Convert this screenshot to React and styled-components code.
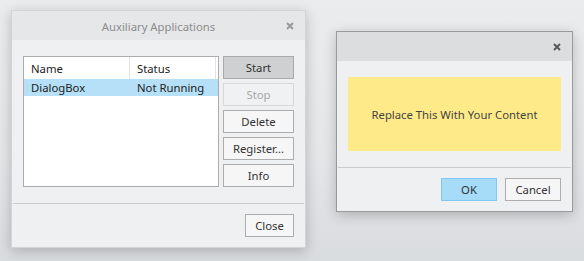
import React from 'react'
import styled, { createGlobalStyle } from 'styled-components'

const GlobalStyle = createGlobalStyle`
  html, body {
    margin: 0;
    padding: 0;
  }
  body {
    width: 584px;
    height: 261px;
    overflow: hidden;
    background: linear-gradient(180deg, #ebecee 0%, #e4e6e8 60%, #d9dcdf 100%);
    font-family: "Noto Sans", "Open Sans", sans-serif;
    font-size: 11.3px;
    color: #333;
  }
`

const Desktop = styled.div`
  display: flex;
  align-items: flex-start;
  gap: 30px;
  padding: 10px 0 0 11px;
`

const Window = styled.div`
  display: flex;
  flex-direction: column;
  width: ${p => p.$width}px;
  height: ${p => p.$height}px;
  margin-top: ${p => p.$top || 0}px;
  box-sizing: border-box;
  background: #eff0f2;
  border: 1px solid ${p => (p.$active ? '#9a9a9a' : '#d3d4d6')};
  box-shadow: 0 3px 12px rgba(0, 0, 0, 0.22);
`

const TitleBar = styled.div`
  position: relative;
  height: 29px;
  display: flex;
  align-items: center;
  justify-content: center;
  background: ${p => (p.$active ? '#dcdddf' : '#e6e7e9')};
  color: #8c8c8c;
  padding-top: 1px;
  box-sizing: border-box;
`

const CloseX = styled.svg`
  position: absolute;
  right: 11px;
  top: 11px;
`

const Body = styled.div`
  flex: 1;
  display: flex;
  gap: 4px;
  padding: 16px 11px 0 11px;
`

const Separator = styled.div`
  height: 1px;
  margin: 0 1px;
  background: #c9cacc;
`

const Footer = styled.div`
  display: flex;
  justify-content: flex-end;
  gap: 8px;
  padding: 10px 11px 10px 11px;
`

const ListBox = styled.div`
  width: 196px;
  height: 131px;
  box-sizing: border-box;
  border: 1px solid #acacac;
  background: #fff;
`

const Row = styled.div`
  display: grid;
  grid-template-columns: 106px 86px 2px;
  height: ${p => p.$h}px;
  align-items: center;
  background: ${p => (p.$selected ? '#b5e0f7' : 'transparent')};
  color: #222;
`

const Cell = styled.div`
  height: 100%;
  display: flex;
  align-items: ${p => (p.$header ? 'flex-end' : 'center')};
  padding: ${p => (p.$header ? '0 0 3px 7px' : '0 0 0 7px')};
  box-sizing: border-box;
  border-right: ${p => (p.$header ? '1px solid #e3e3e3' : 'none')};
  white-space: nowrap;
`

const ButtonColumn = styled.div`
  display: flex;
  flex-direction: column;
  gap: 4px;
`

const Button = styled.div`
  width: ${p => p.$width || 71}px;
  height: 23px;
  box-sizing: border-box;
  display: flex;
  align-items: center;
  justify-content: center;
  border: 1px solid ${p =>
    p.$variant === 'pressed' ? '#a9a9aa'
    : p.$variant === 'disabled' ? '#d8d8d8'
    : p.$variant === 'primary' ? '#7fc8ef'
    : '#adadad'};
  background: ${p =>
    p.$variant === 'pressed' ? '#cfd0d2'
    : p.$variant === 'disabled' ? '#f0f1f2'
    : p.$variant === 'primary' ? '#a6dcf8'
    : '#f6f6f7'};
  color: ${p => (p.$variant === 'disabled' ? '#a8a8a8' : '#333')};
`

const Content = styled.div`
  flex: 1;
  padding: 16px 11px 16px 11px;
  display: flex;
`

const Placeholder = styled.div`
  flex: 1;
  display: flex;
  align-items: center;
  justify-content: center;
  background: #ffea89;
  color: #444;
`

const XIcon = ({ color }) => (
  <CloseX width="8" height="8" viewBox="0 0 8 8">
    <path d="M1 1 L7 7 M7 1 L1 7" stroke={color} strokeWidth="2" />
  </CloseX>
)

export default function App() {
  return (
    <>
      <GlobalStyle />
      <Desktop>
        <Window $width={295} $height={238}>
          <TitleBar>
            Auxiliary Applications
            <XIcon color="#9a9a9a" />
          </TitleBar>
          <Body>
            <ListBox>
              <Row $h={22}>
                <Cell $header>Name</Cell>
                <Cell $header>Status</Cell>
                <Cell $header />
              </Row>
              <Row $h={17} $selected>
                <Cell>DialogBox</Cell>
                <Cell>Not Running</Cell>
                <Cell />
              </Row>
            </ListBox>
            <ButtonColumn>
              <Button $variant="pressed">Start</Button>
              <Button $variant="disabled">Stop</Button>
              <Button>Delete</Button>
              <Button>Register...</Button>
              <Button>Info</Button>
            </ButtonColumn>
          </Body>
          <Separator />
          <Footer>
            <Button $width={49}>Close</Button>
          </Footer>
        </Window>

        <Window $width={237} $height={181} $top={21} $active>
          <TitleBar $active>
            <XIcon color="#5a5a5a" />
          </TitleBar>
          <Content>
            <Placeholder>Replace This With Your Content</Placeholder>
          </Content>
          <Separator />
          <Footer>
            <Button $width={56} $variant="primary">OK</Button>
            <Button $width={56}>Cancel</Button>
          </Footer>
        </Window>
      </Desktop>
    </>
  )
}
